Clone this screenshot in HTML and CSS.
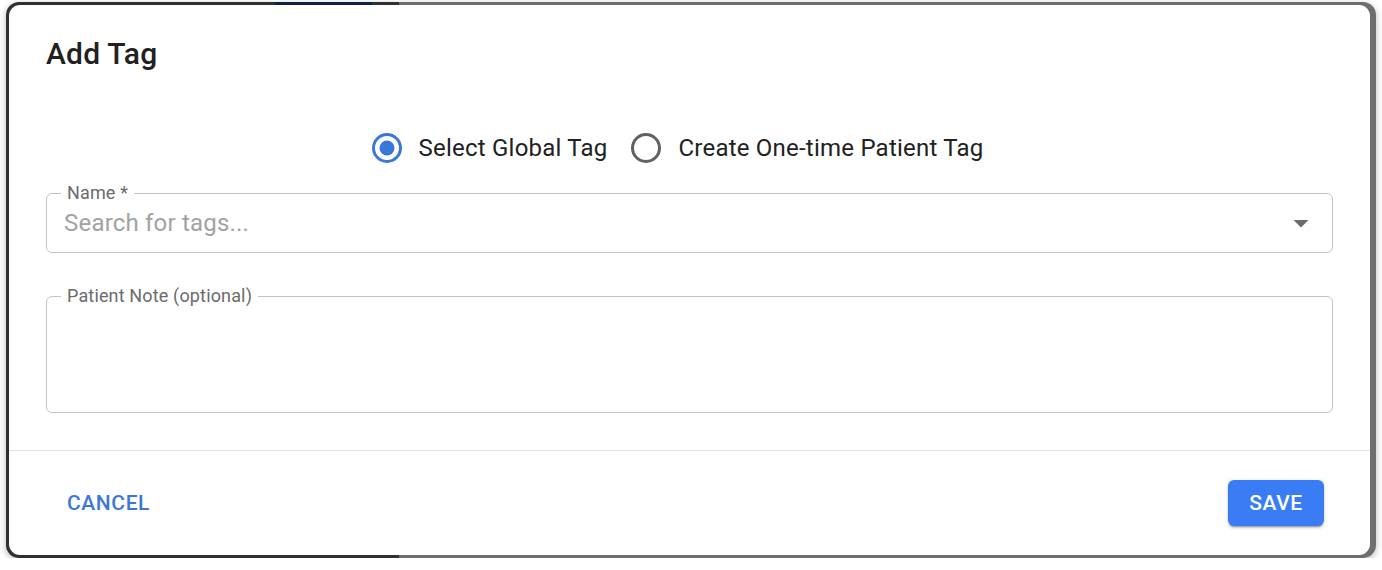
FILE: index.html
```html
<!DOCTYPE html>
<html lang="en">
<head>
<meta charset="utf-8">
<title>Add Tag</title>
<link rel="stylesheet" href="styles.css">
</head>
<body>
<div class="window">
  <div class="dialog">
    <h2 class="dialog-title">Add Tag</h2>
    <div class="dialog-content">
      <div class="radio-group">
        <label class="radio-option">
          <svg class="radio radio-checked" viewBox="0 0 30 30" width="30" height="30"><circle cx="15" cy="15" r="13.5" fill="none" stroke="currentColor" stroke-width="3"/><circle cx="15" cy="15" r="7.5" fill="currentColor"/></svg>
          <span class="radio-label">Select Global Tag</span>
        </label>
        <label class="radio-option">
          <svg class="radio" viewBox="0 0 30 30" width="30" height="30"><circle cx="15" cy="15" r="13.5" fill="none" stroke="currentColor" stroke-width="3"/></svg>
          <span class="radio-label">Create One-time Patient Tag</span>
        </label>
      </div>
      <div class="field field-name">
        <span class="field-label">Name *</span>
        <span class="placeholder">Search for tags...</span>
        <svg class="dropdown-arrow" viewBox="0 0 36 36" width="36" height="36"><path d="M10.5 15l7.5 7.5 7.5-7.5z" fill="currentColor"/></svg>
      </div>
      <div class="field field-note">
        <span class="field-label">Patient Note (optional)</span>
      </div>
    </div>
    <div class="dialog-actions">
      <button class="btn btn-text" type="button">Cancel</button>
      <button class="btn btn-contained" type="button">Save</button>
    </div>
  </div>
</div>
</body>
</html>
```

FILE: styles.css
```css
* { box-sizing: border-box; }

html, body {
  margin: 0;
  padding: 0;
  background: #ffffff;
  font-family: Roboto, "Liberation Sans", Arial, sans-serif;
}

.window {
  margin: 2px 6px 0 6px;
  width: 1370px;
  height: 556px;
  padding: 3px 6px 3px 3px;
  border-radius: 13px;
  background:
    linear-gradient(#0d2247, #0d2247) 269px 0 / 97px 4px no-repeat,
    linear-gradient(to right, #303030 0, #303030 393px, #6e6e6e 393px, #6e6e6e 100%);
  box-shadow: 0 2px 7px rgba(0, 0, 0, 0.28);
}

.dialog {
  width: 1361px;
  height: 550px;
  background: #ffffff;
  border-radius: 11px;
  display: flex;
  flex-direction: column;
  overflow: hidden;
}

.dialog-title {
  margin: 0;
  padding: 25px 37px 0 37px;
  font-size: 30px;
  line-height: 48px;
  font-weight: 500;
  color: #212121;
  letter-spacing: 0.2px;
}

.dialog-content {
  flex: 1;
  padding: 50px 37px 0 37px;
  display: flex;
  flex-direction: column;
}

.radio-group {
  display: flex;
  justify-content: center;
  height: 40px;
}

.radio-option {
  display: flex;
  align-items: center;
  margin-right: 24px;
  color: #212121;
}

.radio {
  display: block;
  color: #616161;
  flex: none;
}

.radio-checked {
  color: #3a78d8;
}

.radio-label {
  margin-left: 17px;
  font-size: 24px;
  line-height: 28px;
  letter-spacing: 0.22px;
}

.field {
  position: relative;
  border: 1.5px solid #c4c4c4;
  border-radius: 6px;
}

.field-name {
  margin-top: 25px;
  height: 60px;
  display: flex;
  align-items: center;
  padding: 0 13px 0 17px;
}

.field-note {
  margin-top: 43px;
  height: 117px;
}

.field-label {
  position: absolute;
  left: 14px;
  top: -12px;
  padding: 0 6px;
  background: #ffffff;
  font-size: 18px;
  line-height: 21px;
  color: #6b6b6b;
  letter-spacing: 0.15px;
}

.placeholder {
  flex: 1;
  font-size: 24px;
  line-height: 28px;
  color: #a2a2a2;
  letter-spacing: 0.2px;
}

.dropdown-arrow {
  display: block;
  color: #6b6b6b;
  flex: none;
}

.dialog-actions {
  border-top: 1px solid #e2e2e2;
  padding: 29px 46px 29px 46px;
  display: flex;
  justify-content: space-between;
  align-items: center;
}

.btn {
  font-family: Roboto, "Liberation Sans", Arial, sans-serif;
  font-size: 21px;
  font-weight: 500;
  text-transform: uppercase;
  letter-spacing: 0.6px;
  height: 46px;
  border: none;
  border-radius: 6px;
  cursor: pointer;
}

.btn-text {
  background: transparent;
  color: #3b78d6;
  padding: 0 12px;
}

.btn-contained {
  width: 96px;
  background: #397cf4;
  color: #ffffff;
  padding: 0;
  box-shadow: 0 3px 1px -2px rgba(0, 0, 0, 0.2), 0 2px 2px 0 rgba(0, 0, 0, 0.14), 0 1px 5px 0 rgba(0, 0, 0, 0.12);
}
```
